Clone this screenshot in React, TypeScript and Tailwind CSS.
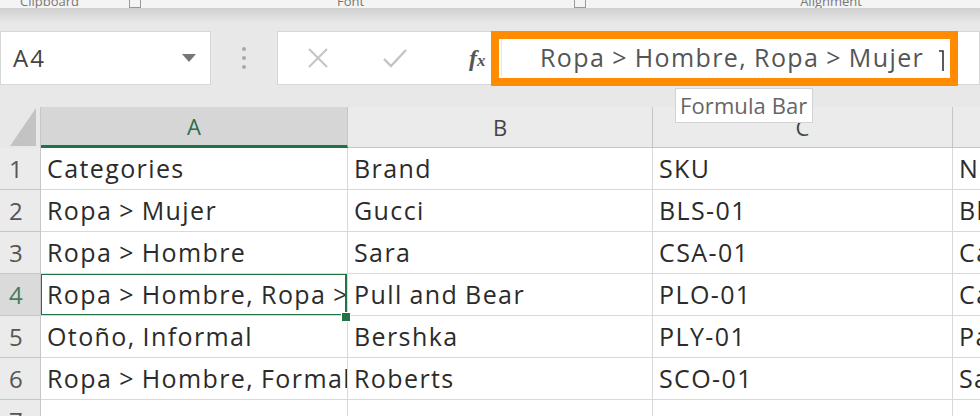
import React from "react";

const cols = [
  { id: "A", w: "w-[307px]" },
  { id: "B", w: "w-[305px]" },
  { id: "C", w: "w-[300px]" },
  { id: "D", w: "w-[120px]" },
];

const rows = [
  ["Categories", "Brand", "SKU", "Name"],
  ["Ropa > Mujer", "Gucci", "BLS-01", "Blusa"],
  ["Ropa > Hombre", "Sara", "CSA-01", "Camisa"],
  ["Ropa > Hombre, Ropa > Mujer", "Pull and Bear", "PLO-01", "Camiseta"],
  ["Otoño, Informal", "Bershka", "PLY-01", "Pantalón"],
  ["Ropa > Hombre, Formal", "Roberts", "SCO-01", "Saco"],
  ["", "", "", ""],
];

export default function App() {
  return (
    <div className="relative w-[980px] h-[416px] overflow-hidden bg-[#e8e8e8] font-['Open_Sans','Liberation_Sans',sans-serif] text-[#333]">
      {/* Ribbon group labels, cut off at the top */}
      <div className="h-[8px] bg-[#f4f4f4] relative overflow-hidden text-[13px] text-[#777]">
        <div className="flex items-end h-full -mb-[8px]">
          <span className="ml-[20px] leading-none">Clipboard</span>
          <span className="ml-[50px] w-[12px] h-[12px] border border-[#999]" />
          <span className="ml-[196px] leading-none">Font</span>
          <span className="ml-[210px] w-[12px] h-[12px] border border-[#999]" />
          <span className="ml-[214px] leading-none">Alignment</span>
        </div>
      </div>
      <div className="h-[15px] bg-gradient-to-b from-[#cfcfcf] to-[#e8e8e8]" />

      {/* Name box + formula bar */}
      <div className="flex items-stretch h-[54px] mt-[8px]">
        <div className="w-[211px] bg-white border border-[#d6d6d6] flex items-center justify-between pl-[12px] pr-[14px]">
          <span className="text-[24px] tracking-[2px] text-[#444]">A4</span>
          <svg width="14" height="8" viewBox="0 0 14 8">
            <path d="M0 0 L14 0 L7 8 Z" fill="#777" />
          </svg>
        </div>
        <div className="w-[66px] flex flex-col items-center justify-center gap-[5px]">
          <span className="w-[4px] h-[4px] rounded-full bg-[#a8a8a8]" />
          <span className="w-[4px] h-[4px] rounded-full bg-[#a8a8a8]" />
          <span className="w-[4px] h-[4px] rounded-full bg-[#a8a8a8]" />
        </div>
        <div className="flex-1 bg-white border border-[#d6d6d6] flex items-center">
          <div className="w-[215px] flex items-center">
            <svg className="ml-[29px]" width="22" height="22" viewBox="0 0 22 22">
              <path d="M2 2 L20 20 M20 2 L2 20" stroke="#c4c4c4" strokeWidth="2" />
            </svg>
            <svg className="ml-[53px]" width="26" height="20" viewBox="0 0 26 20">
              <path d="M2 11 L9 18 L24 2" stroke="#c4c4c4" strokeWidth="2.4" fill="none" />
            </svg>
            <span className="ml-[61px] text-[24px] italic font-bold text-[#555] font-['Liberation_Serif',serif] leading-none">
              f<span className="text-[17px]">x</span>
            </span>
          </div>
          <div className="w-px h-[38px] bg-[#e0e0e0] ml-[3px]" />
          <div className="w-px h-[38px] bg-[#e8e8e8] ml-[4px]" />
          <span className="ml-[38px] text-[25px] tracking-[1.4px] [word-spacing:-1px] text-[#555] whitespace-nowrap">
            Ropa &gt; Hombre, Ropa &gt; Mujer
          </span>
          <svg className="ml-[14px] mt-[6px]" width="8" height="22" viewBox="0 0 8 22">
            <path d="M1 1 L5 1 L5 21" stroke="#333" strokeWidth="1.6" fill="none" />
          </svg>
        </div>
      </div>

      {/* Highlight around formula bar */}
      <div className="absolute left-[491px] top-[31px] w-[467px] h-[55px] border-[8px] border-[#ff8c00]" />

      {/* Tooltip */}
      <div className="absolute left-[675px] top-[88px] w-[138px] h-[35px] bg-white border border-[#d3d3d3] z-10 flex items-center pl-[4px] text-[22px] tracking-[0.1px] text-[#666] whitespace-nowrap overflow-hidden">
        Formula Bar
      </div>

      {/* Sheet */}
      <div className="mt-[22px] flex flex-col">
        {/* Column headers */}
        <div className="flex h-[41px]">
          <div className="w-[41px] shrink-0 relative border-r border-[#c6c6c6]">
            <svg className="absolute left-[10px] top-[1px]" width="26" height="38" viewBox="0 0 26 38">
              <path d="M26 0 L26 38 L0 38 Z" fill="#c3c3c3" />
            </svg>
          </div>
          {cols.map((c) => (
            <div
              key={c.id}
              className={`${c.w} shrink-0 flex items-center justify-center text-[22px] border-r border-[#c6c6c6] ${
                c.id === "A"
                  ? "bg-[#d6d6d6] text-[#2f6e4a] border-b-[3px] border-b-[#217346]"
                  : "bg-[#ebebeb] text-[#444] border-b border-b-[#c6c6c6]"
              }`}
            >
              {c.id}
            </div>
          ))}
        </div>

        {/* Rows */}
        {rows.map((r, i) => {
          const n = i + 1;
          const active = n === 4;
          return (
            <div key={n} className="flex h-[42px]">
              <div
                className={`w-[41px] shrink-0 flex items-center pl-[9px] text-[24px] border-r border-b border-[#c6c6c6] ${
                  active ? "bg-[#dadada] text-[#4a7a5e]" : "bg-[#ebebeb] text-[#555]"
                }`}
              >
                {n}
              </div>
              {cols.map((c, j) => (
                <div
                  key={c.id}
                  className={`${c.w} shrink-0 relative flex items-center bg-white border-r border-b border-[#d9d9d9] overflow-hidden whitespace-nowrap pl-[6px] text-[25px] tracking-[1.4px] [word-spacing:-1px] text-[#2b2b2b]`}
                >
                  {r[j]}
                  {active && j === 0 && (
                    <div className="absolute -left-[2px] -top-[2px] w-[309px] h-[45px] border-[3px] border-[#217346]" />
                  )}
                </div>
              ))}
            </div>
          );
        })}
      </div>

      {/* Fill handle */}
      <div className="absolute left-[341px] top-[312px] w-[10px] h-[10px] bg-[#217346] border border-white" />
    </div>
  );
}
